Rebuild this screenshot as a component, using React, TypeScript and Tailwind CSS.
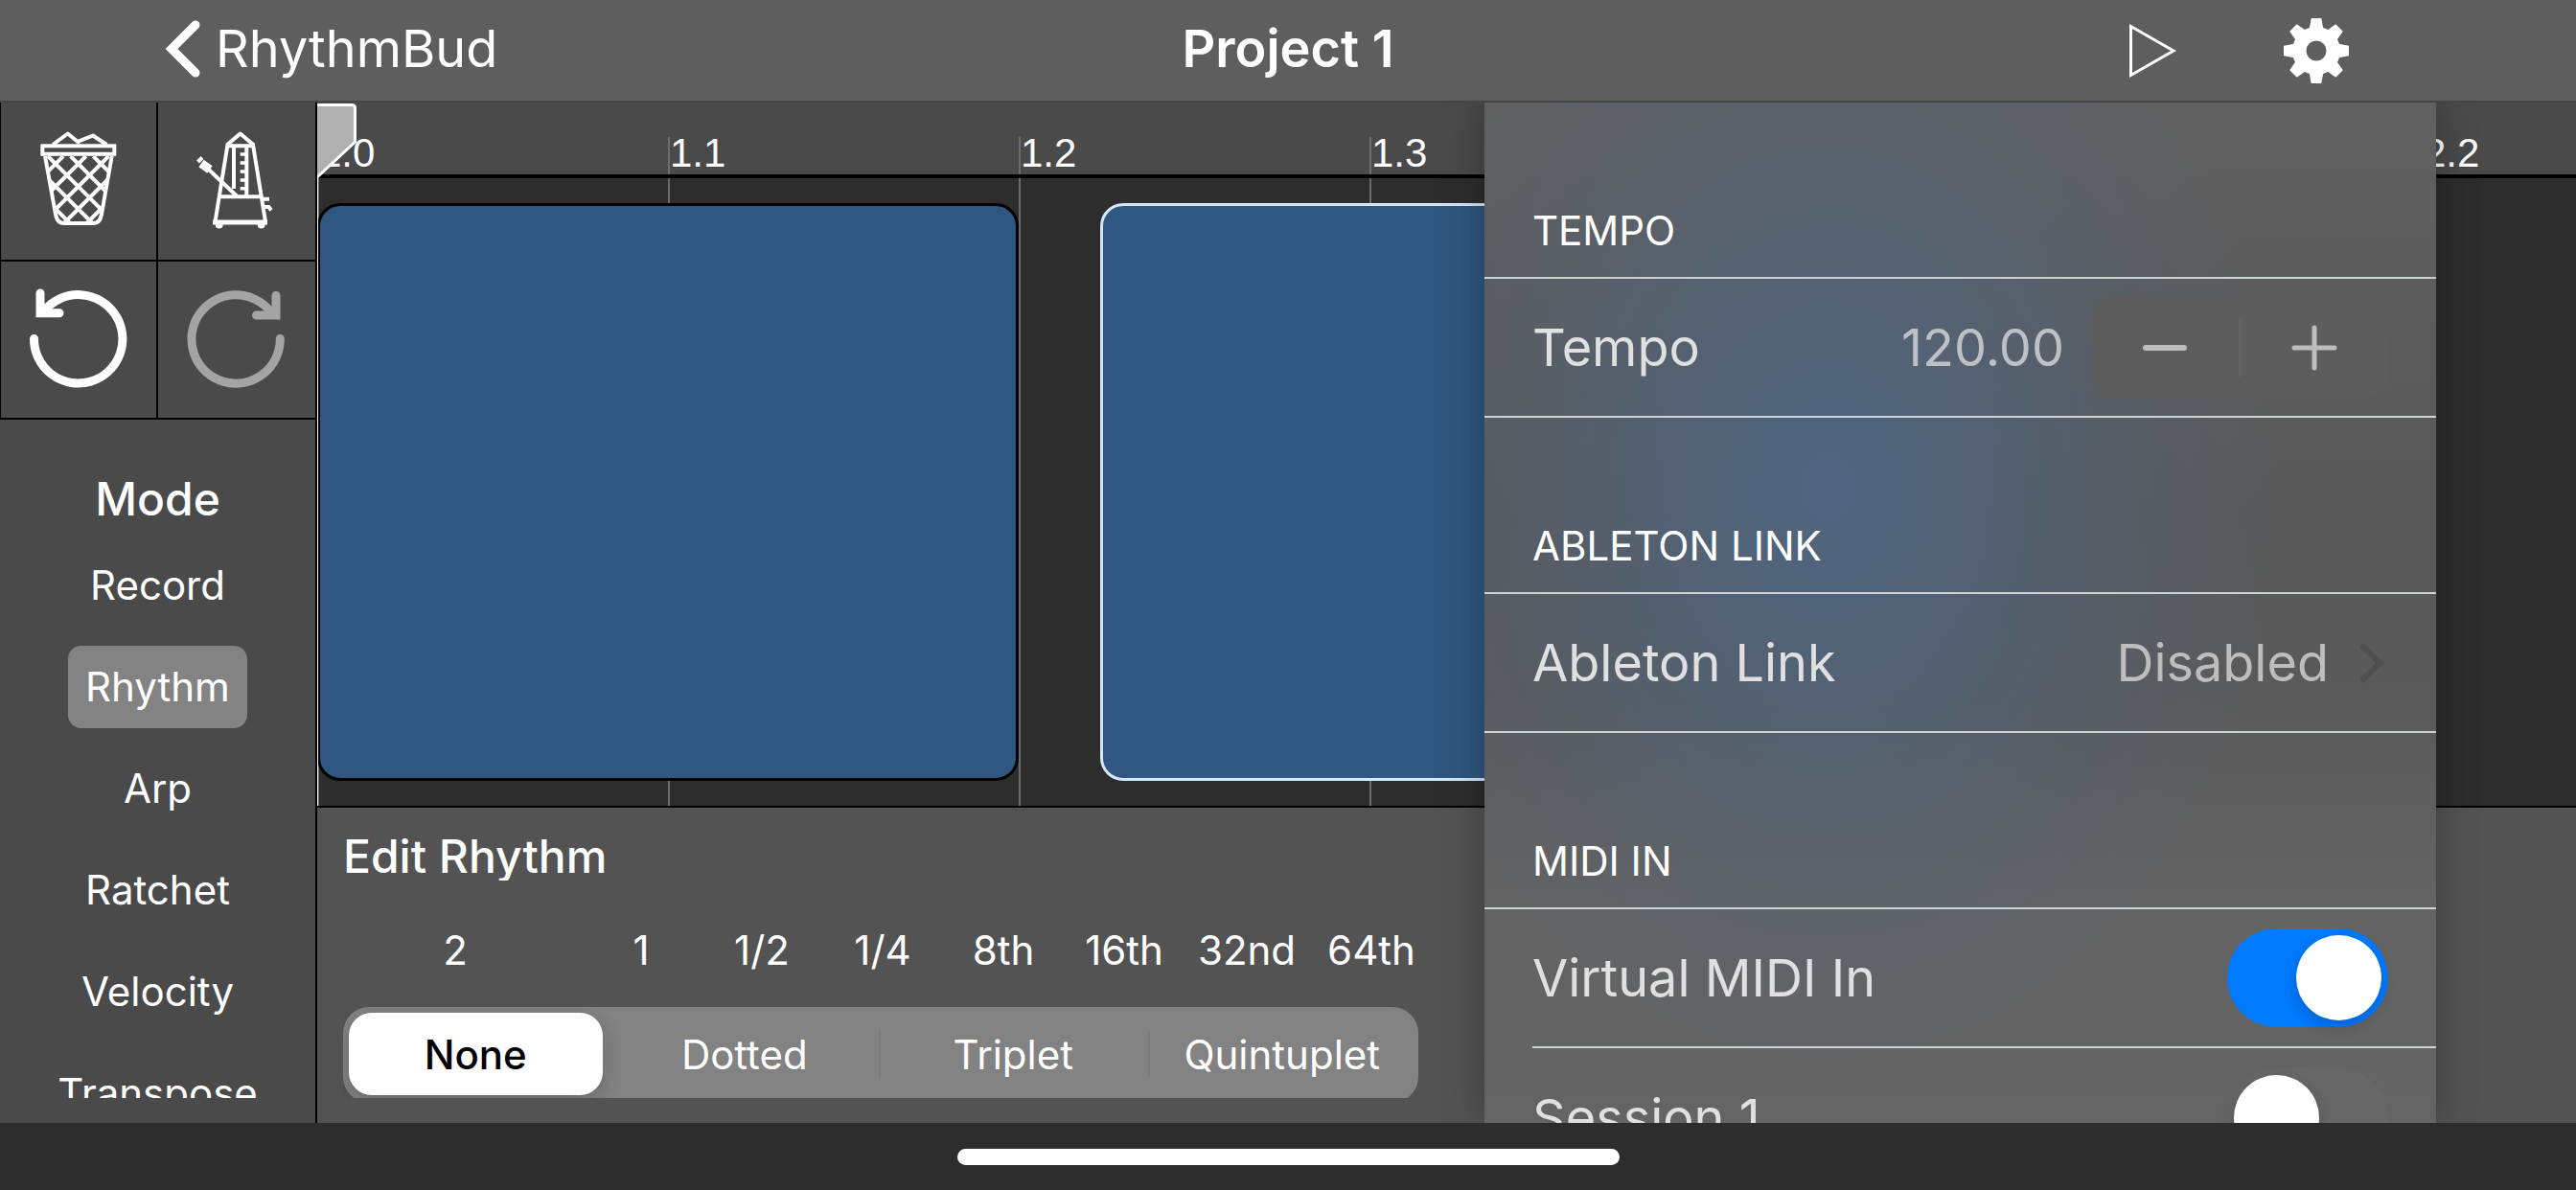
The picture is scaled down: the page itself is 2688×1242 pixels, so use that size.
import { useState, type ReactNode } from 'react';
import clsx from 'clsx';

const BEATS = ['1.0', '1.1', '1.2', '1.3', '2.0', '2.1', '2.2'];
const MODES = ['Record', 'Rhythm', 'Arp', 'Ratchet', 'Velocity', 'Transpose'];
const MODIFIERS = ['None', 'Dotted', 'Triplet', 'Quintuplet'];

const DIVISIONS = [
  { label: '2', width: 'w-[234px] mr-[14px]' },
  { label: '1', width: 'w-[126px]' },
  { label: '1/2', width: 'w-[126px]' },
  { label: '1/4', width: 'w-[126px]' },
  { label: '8th', width: 'w-[126px]' },
  { label: '16th', width: 'w-[126px]' },
  { label: '32nd', width: 'w-[130px]' },
  { label: '64th', width: 'w-[130px]' },
];

function TrashIcon() {
  return (
    <svg viewBox="0 0 100 100" className="size-[100px] overflow-visible" fill="none" stroke="currentColor" strokeWidth="4">
      <clipPath id="basket">
        <path d="M15 24L26.3 86Q28 94 35 94H65Q72 94 73.7 86L84.7 24Z" />
      </clipPath>
      <path d="M23 12L38.7 0.5L51 10.5M49 8.8L65 2.5L79.3 12" strokeLinejoin="round" />
      <rect x="12.3" y="13.3" width="75" height="8.5" />
      <path d="M15 24L26.3 86Q28 94 35 94H65Q72 94 73.7 86L84.7 24" />
      <path
        clipPath="url(#basket)"
        d="M65.3 24l70 70M41.7 24l70 70M18 24l70 70M-5.5 24l70 70M-29 24l70 70M34 24l-70 70M57.7 24l-70 70M81.3 24l-70 70M104.8 24l-70 70M128.5 24l-70 70"
      />
    </svg>
  );
}

function MetronomeIcon() {
  return (
    <svg viewBox="0 0 100 100" className="size-[100px] overflow-visible" fill="none" stroke="currentColor" strokeWidth="4">
      <path d="M39.5 12.5L53.7 0.5L68 12.5" strokeLinejoin="round" />
      <path d="M40.5 12L27.5 92.5M67 12L80 92.5M39 13.3H68.5M32 66.3H76" />
      <path d="M25 93H82" strokeWidth="5" />
      <path d="M47 13.3V58M60.3 13.3V66" />
      <path d="M53.7 22H60M53.7 31H60M53.7 40H60M53.7 49H60M53.7 57.7H60" strokeWidth="3.4" />
      <path d="M50 65.5L18.7 36" />
      <path d="M22 38L13 31.5" strokeWidth="9" />
      <path d="M9.5 30L14 25.5" strokeWidth="4" />
      <path d="M78 68.7H84M79 77H83.5L86 80.5" />
      <circle cx="31.7" cy="95.5" r="4" fill="currentColor" stroke="none" />
      <circle cx="75.7" cy="95.5" r="4" fill="currentColor" stroke="none" />
    </svg>
  );
}

function UndoIcon() {
  return (
    <svg viewBox="0 0 100 100" className="size-[100px] overflow-visible" fill="none" stroke="currentColor" strokeWidth="9" strokeLinecap="round">
      <path d="M3.5 49.5A46.2 46.2 0 1 0 14 20.5" />
      <path d="M10 2V22.7H30" />
    </svg>
  );
}

function RedoIcon() {
  return (
    <svg viewBox="0 0 100 100" className="size-[100px] overflow-visible" fill="none" stroke="currentColor" strokeWidth="9" strokeLinecap="round">
      <path d="M95.3 49.5A46.2 46.2 0 1 1 85.5 21.5" />
      <path d="M91 4.5V25H70.5" />
    </svg>
  );
}

function GearIcon() {
  return (
    <svg viewBox="-34 -34 68 68" className="size-[68px]" fill="currentColor">
      <circle r="17.75" fill="none" stroke="currentColor" strokeWidth="14.5" />
      {[0, 45, 90, 135, 180, 225, 270, 315].map((angle) => (
        <path key={angle} d="M-7.5 -22L-5.3 -34H5.3L7.5 -22Z" transform={`rotate(${angle})`} />
      ))}
    </svg>
  );
}

function ToolButton({ label, disabled, children }: { label: string; disabled?: boolean; children: ReactNode }) {
  return (
    <button
      aria-label={label}
      disabled={disabled}
      className="flex items-center justify-center border-b-2 border-black text-white odd:border-r-2 disabled:text-[#a4a4a4]"
    >
      {children}
    </button>
  );
}

function SectionHeader({ children }: { children: ReactNode }) {
  return (
    <h3 className="flex h-[184px] items-end border-b-2 border-[#cdd3d3] px-[50px] pb-6 text-[42px] leading-[48px] text-white">
      {children}
    </h3>
  );
}

function SwitchRow({ label, defaultChecked, last }: { label: string; defaultChecked?: boolean; last?: boolean }) {
  return (
    <div className="pl-[50px]">
      <label className={clsx('flex h-[145px] items-center justify-between pr-[50px]', !last && 'border-b-2 border-[#cdd3d3]')}>
        {label}
        <input
          type="checkbox"
          role="switch"
          defaultChecked={defaultChecked}
          className="h-[103px] w-[168px] appearance-none rounded-full bg-[#676767] p-[7px] before:block before:size-[89px] before:rounded-full before:bg-white before:shadow-[0_6px_16px_rgba(0,0,0,0.2)] checked:bg-[#007aff] checked:before:ml-[65px]"
        />
      </label>
    </div>
  );
}

function Header() {
  return (
    <header className="grid h-[107px] shrink-0 grid-cols-3 items-center border-b-2 border-[#454545] bg-[#5e5e5e] text-[54px] leading-none text-white">
      <a href="#projects" className="flex items-center gap-4 pb-1 pl-[172px]">
        <svg viewBox="0 0 37 60" className="h-[60px] w-[37px]" fill="none" stroke="currentColor" strokeWidth="9" strokeLinecap="round">
          <path d="M32 5L7 30L32 55" />
        </svg>
        RhythmBud
      </a>
      <h1 className="pb-1 text-center font-semibold">Project 1</h1>
      <div className="flex items-center justify-end gap-[112px] pr-[237px]">
        <button aria-label="Play">
          <svg viewBox="0 0 50 60" className="h-[60px] w-[50px]" fill="none" stroke="currentColor" strokeWidth="3">
            <path d="M2.5 4.5L47 30L2.5 55.5Z" />
          </svg>
        </button>
        <button aria-label="Settings">
          <GearIcon />
        </button>
      </div>
    </header>
  );
}

function Sidebar() {
  const [mode, setMode] = useState('Rhythm');

  return (
    <aside className="flex w-[331px] shrink-0 flex-col border-r-2 border-black bg-[#4a4a4a] pb-[26px] text-white">
      <div className="grid h-[331px] shrink-0 grid-cols-2 grid-rows-2 border-l border-black">
        <ToolButton label="Delete">
          <TrashIcon />
        </ToolButton>
        <ToolButton label="Metronome">
          <MetronomeIcon />
        </ToolButton>
        <ToolButton label="Undo">
          <UndoIcon />
        </ToolButton>
        <ToolButton label="Redo" disabled>
          <RedoIcon />
        </ToolButton>
      </div>
      <nav className="flex min-h-0 flex-1 flex-col items-center overflow-hidden pt-[53px]">
        <h2 className="mb-[17px] text-[48px] leading-[60px] font-medium">Mode</h2>
        <div className="flex flex-col items-center gap-5">
          {MODES.map((name) => (
            <button
              key={name}
              onClick={() => setMode(name)}
              className={clsx('h-[86px] shrink-0 rounded-[14px] px-[18px] text-[42px] leading-[48px]', mode === name && 'bg-[#838383]')}
            >
              {name}
            </button>
          ))}
        </div>
      </nav>
    </aside>
  );
}

function Timeline() {
  return (
    <section className="relative flex min-h-0 flex-1 flex-col overflow-hidden bg-[#2d2d2d]">
      <div className="flex h-[79px] shrink-0 border-b-4 border-black bg-[#4a4a4a] pt-[36px]">
        {BEATS.map((beat) => (
          <div
            key={beat}
            className="w-[366px] shrink-0 border-l-2 border-[#6c6c6c] font-['Liberation_Sans',Arial,sans-serif] text-[42px] leading-[34px] text-white"
          >
            {beat}
          </div>
        ))}
      </div>
      <div className="relative flex min-h-0 flex-1">
        {BEATS.map((beat) => (
          <div key={beat} className="w-[366px] shrink-0 border-l-2 border-[#6c6c6c]" />
        ))}
        <div className="absolute inset-y-[26px] left-0 w-[732px] rounded-[24px] border-3 border-black bg-[#30577f]" />
        <div className="absolute inset-y-[26px] left-[817px] w-[732px] rounded-[24px] border-3 border-[#d5e8fb] bg-[#30577f]" />
      </div>

      {/* playhead */}
      <svg viewBox="0 0 42 80" className="absolute top-0 left-0 h-[80px] w-[42px]" fill="#b0b0b0" stroke="#fff" strokeWidth="3">
        <path d="M-4 2.5H36Q39.5 2.5 39.5 6V41L0 78" />
      </svg>
      <div className="absolute top-[78px] bottom-0 left-0 w-px bg-white" />
    </section>
  );
}

function EditPanel() {
  const [modifier, setModifier] = useState('None');

  return (
    <section className="flex h-[331px] shrink-0 flex-col border-t-2 border-black bg-[#535353] px-[27px] pb-[26px] text-white">
      <h2 className="mt-[22px] h-[54px] overflow-hidden text-[48px] leading-[58px] font-medium">Edit Rhythm</h2>
      <div className="mt-[44px] flex text-[42px] leading-[58px]">
        {DIVISIONS.map(({ label, width }) => (
          <button key={label} className={clsx('shrink-0', width)}>
            {label}
          </button>
        ))}
      </div>
      <div className="mt-[30px] min-h-0 flex-1 overflow-hidden">
        <div className="grid h-[100px] w-[1122px] grid-cols-4 rounded-[27px] bg-[#828282] pt-[6px] pb-2">
          {MODIFIERS.map((name, i) => (
            <button
              key={name}
              onClick={() => setModifier(name)}
              className={clsx(
                'mr-2.5 ml-1.5 rounded-[24px] text-[42px]',
                modifier === name ? 'bg-white font-medium text-black shadow-[0_6px_20px_rgba(0,0,0,0.2)]' : 'relative',
              )}
            >
              {name}
              {i > 1 && <span className="absolute top-[18px] -left-2 h-[50px] w-[2px] bg-[#7b7b7b]" />}
            </button>
          ))}
        </div>
      </div>
    </section>
  );
}

function SettingsPanel() {
  const [tempo, setTempo] = useState(120);

  return (
    <div className="absolute inset-y-0 right-[146px] w-[993px] overflow-hidden bg-[radial-gradient(ellipse_480px_620px_at_36%_38%,#50657f,#50657fc8_25%,#50657f70_52%,#50657f28_78%,#50657f00),linear-gradient(#606060,#595959_40%,#5a5a5a_58%,#636363_78%,#646464)] text-[54px] leading-[64px] text-[#e0e0e0] shadow-[0_0_40px_rgba(0,0,0,0.3)]">
      <SectionHeader>TEMPO</SectionHeader>
      <div className="flex h-[145px] items-center border-b-2 border-[#cdd3d3] px-[50px]">
        Tempo
        <output className="ml-auto text-[#bdc0c4]">{tempo.toFixed(2)}</output>
        <div className="ml-7 flex h-[106px] w-[310px] items-center rounded-[27px] bg-[#5d5d5d] text-[#bdbdbd]">
          <button aria-label="Decrease tempo" className="flex flex-1 justify-center" onClick={() => setTempo(tempo - 1)}>
            <svg viewBox="0 0 48 48" className="size-12" stroke="currentColor" strokeWidth="6" strokeLinecap="round">
              <path d="M4 24H44" />
            </svg>
          </button>
          <span className="h-[60px] w-[3px] bg-[#636364]" />
          <button aria-label="Increase tempo" className="flex flex-1 justify-center" onClick={() => setTempo(tempo + 1)}>
            <svg viewBox="0 0 48 48" className="size-12" stroke="currentColor" strokeWidth="5" strokeLinecap="round">
              <path d="M3 24H45M24 3V45" />
            </svg>
          </button>
        </div>
      </div>

      <SectionHeader>ABLETON LINK</SectionHeader>
      <a href="#link" className="flex h-[145px] items-center border-b-2 border-[#cdd3d3] px-[50px]">
        Ableton Link
        <span className="ml-auto text-[#bdbdbd]">Disabled</span>
        <svg viewBox="0 0 30 42" className="mr-1 ml-7 h-[42px] w-[30px]" fill="none" stroke="#4e4e4f" strokeWidth="6" strokeLinecap="round">
          <path d="M8 4L26 21L8 38" />
        </svg>
      </a>

      <SectionHeader>MIDI IN</SectionHeader>
      <SwitchRow label="Virtual MIDI In" defaultChecked />
      <SwitchRow label="Session 1" last />
    </div>
  );
}

export default function App() {
  return (
    <div className="flex h-screen flex-col overflow-hidden bg-[#2d2d2d] font-['Inter',sans-serif]">
      <Header />
      <main className="relative flex min-h-0 flex-1 overflow-hidden">
        <Sidebar />
        <div className="flex min-w-0 flex-1 flex-col">
          <Timeline />
          <EditPanel />
        </div>
        <SettingsPanel />
      </main>
      <footer className="flex h-[70px] shrink-0 items-center justify-center">
        <div className="h-[17px] w-[691px] rounded-full bg-white" />
      </footer>
    </div>
  );
}
